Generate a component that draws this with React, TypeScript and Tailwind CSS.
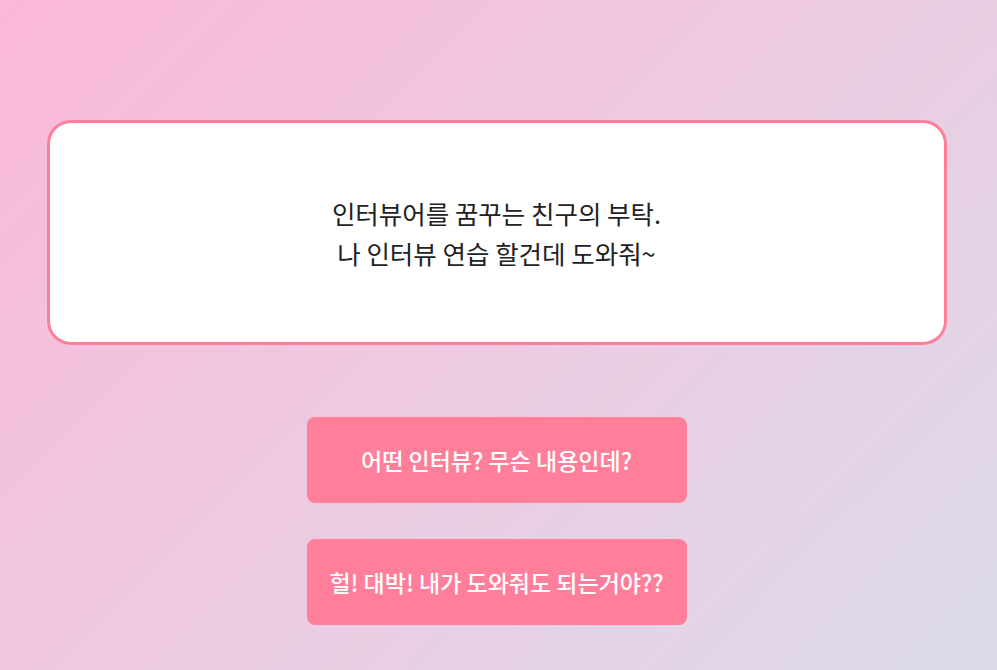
import React from "react";

export default function App() {
  return (
    <div
      className="w-full min-h-[670px] h-[670px] overflow-hidden bg-[linear-gradient(135deg,#fbb8d9_0%,#eec9e0_45%,#dcdbea_100%)] flex flex-col items-center pt-[120px] pr-[4px]"
      style={{ fontFamily: '"Noto Sans CJK KR", "Noto Sans", sans-serif' }}
    >
      <div className="w-[900px] h-[225px] bg-white border-[3px] border-[#ff7f9b] rounded-[24px] flex flex-col items-center justify-center text-[25.5px] leading-[40px] text-[#222]">
        <p>인터뷰어를 꿈꾸는 친구의 부탁.</p>
        <p>나 인터뷰 연습 할건데 도와줘~</p>
      </div>
      <div className="mt-[72px] flex flex-col gap-[36px]">
        <button className="w-[380px] h-[86px] rounded-[8px] bg-[#ff7f9b] text-white text-[23px] font-medium">
          어떤 인터뷰? 무슨 내용인데?
        </button>
        <button className="w-[380px] h-[86px] rounded-[8px] bg-[#ff7f9b] text-white text-[23px] font-medium">
          헐! 대박! 내가 도와줘도 되는거야??
        </button>
      </div>
    </div>
  );
}
